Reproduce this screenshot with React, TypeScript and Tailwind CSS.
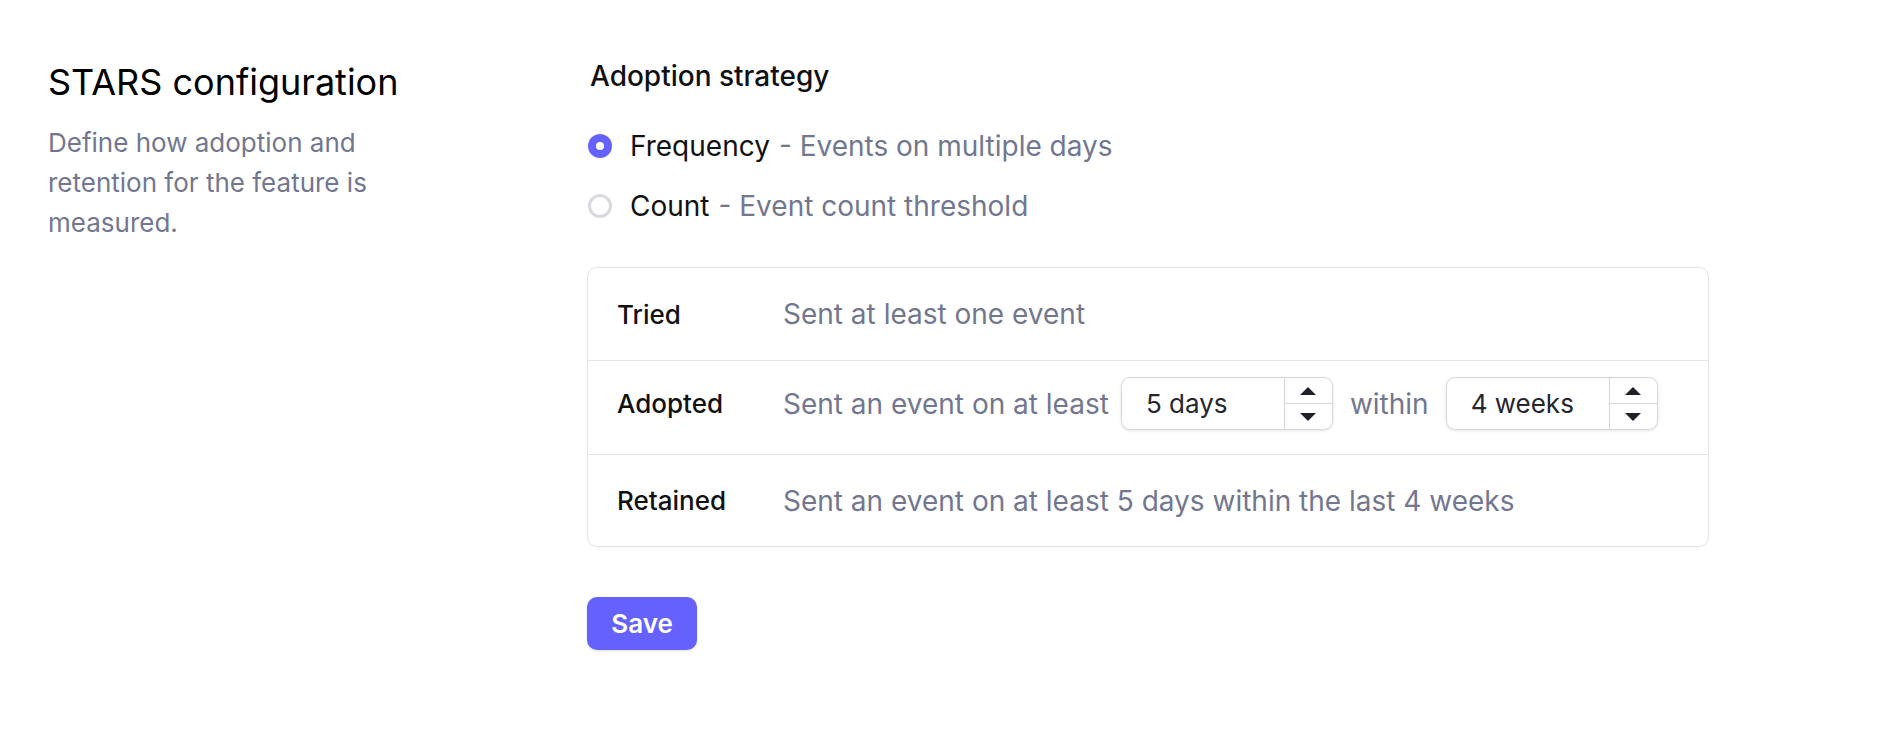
import * as React from "react";

function Radio({ checked, label, hint }: { checked?: boolean; label: string; hint: string }) {
  return (
    <div className="flex h-[36px] items-center">
      {checked ? (
        <span className="ml-[1px] flex h-[24px] w-[24px] items-center justify-center rounded-full bg-[#6461fc]">
          <span className="h-[8px] w-[8px] rounded-full bg-white" />
        </span>
      ) : (
        <span className="ml-[1px] h-[24px] w-[24px] rounded-full border-[3px] border-[#d9dae0] bg-white" />
      )}
      <span className="ml-[18px] text-[28px] leading-[36px] text-[#111114]">{label}</span>
      <span className="ml-[9px] text-[28px] leading-[36px] text-[#72778f]">- {hint}</span>
    </div>
  );
}

function Stepper({ value }: { value: string }) {
  return (
    <div className="flex h-[53px] w-[212px] overflow-hidden rounded-[9px] border border-[#d6d7dd] bg-white shadow-[0_1px_3px_rgba(0,0,0,0.1)]">
      <div className="flex flex-1 items-center pl-[24px] text-[26px] text-[#26262e]">{value}</div>
      <div className="flex w-[48px] flex-col border-l border-[#d6d7dd]">
        <div className="flex flex-1 items-center justify-center border-b border-[#d6d7dd]">
          <svg width="16" height="8" viewBox="0 0 16 8">
            <path d="M8 0 L16 8 L0 8 Z" fill="#1f2128" />
          </svg>
        </div>
        <div className="flex flex-1 items-center justify-center">
          <svg width="16" height="8" viewBox="0 0 16 8">
            <path d="M0 0 L16 0 L8 8 Z" fill="#1f2128" />
          </svg>
        </div>
      </div>
    </div>
  );
}

function Row({ label, children, last, h }: { label: string; children: React.ReactNode; last?: boolean; h: string }) {
  return (
    <div className={`flex items-center pl-[29px] ${h} ${last ? "" : "border-b border-[#e3e4e8]"}`}>
      <div className="w-[166px] shrink-0 text-[26px] font-medium text-[#111114]">{label}</div>
      <div className="flex items-center text-[28px] text-[#72778f]">{children}</div>
    </div>
  );
}

export default function App() {
  return (
    <div className="min-h-screen bg-white font-['Inter',sans-serif]">
      <div className="flex pl-[48px] pt-[58px]">
        <div className="w-[539px] shrink-0 pt-[4px]">
          <h1 className="text-[36px] leading-[40px] text-black">STARS configuration</h1>
          <p className="mt-[21px] max-w-[400px] text-[26px] leading-[40px] text-[#72778f]">
            Define how adoption and retention for the feature is measured.
          </p>
        </div>
        <div className="w-[1122px]">
          <h2 className="ml-[3px] text-[28px] font-medium leading-[36px] text-[#111114]">Adoption strategy</h2>
          <div className="mt-[34px] flex flex-col gap-[24px]">
            <Radio checked label="Frequency" hint="Events on multiple days" />
            <Radio label="Count" hint="Event count threshold" />
          </div>
          <div className="mt-[43px] rounded-[10px] border border-[#e3e4e8]">
            <Row label="Tried" h="h-[93px]">Sent at least one event</Row>
            <Row label="Adopted" h="h-[94px] pb-[8px]">
              <span>Sent an event on at least</span>
              <span className="ml-[12px]">
                <Stepper value="5 days" />
              </span>
              <span className="mx-[17px]">within</span>
              <Stepper value="4 weeks" />
            </Row>
            <Row label="Retained" h="h-[91px]" last>
              Sent an event on at least 5 days within the last 4 weeks
            </Row>
          </div>
          <button className="mt-[50px] h-[53px] w-[110px] rounded-[10px] bg-[#6461fc] text-[26px] font-semibold text-white shadow-[0_1px_3px_rgba(0,0,0,0.12)]">
            Save
          </button>
        </div>
      </div>
    </div>
  );
}
